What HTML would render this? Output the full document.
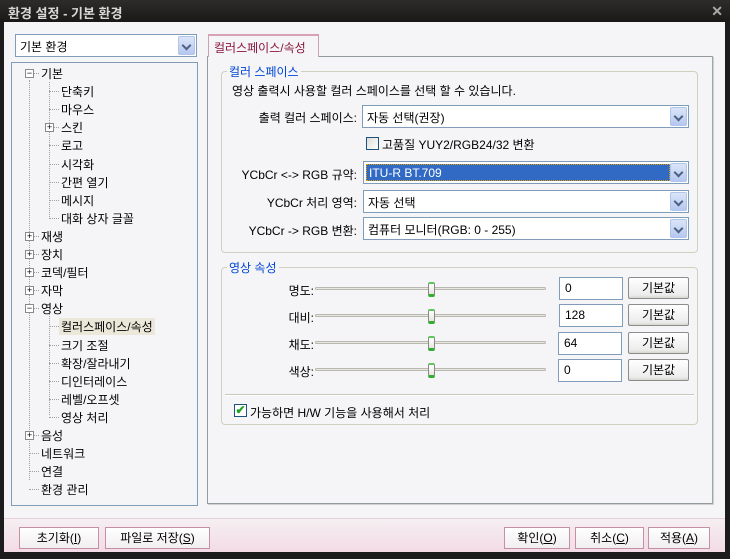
<!DOCTYPE html>
<html><head><meta charset="utf-8"><style>
*{margin:0;padding:0;box-sizing:border-box}
body{width:730px;height:559px;background:#1c1c1c;font-family:"Liberation Sans","Noto Sans CJK KR","NanumGothic",sans-serif;font-size:12px;color:#000;position:relative;overflow:hidden}
.a{position:absolute;white-space:nowrap}
#title{left:0;top:0;width:730px;height:22px;background:linear-gradient(#2e2c2a,#1a1918);color:#d8d8d8;font-size:13px;font-weight:bold;padding:3px 8px}
#client{left:4px;top:22px;width:721px;height:530px;background:#f5f5f7}
.combo{position:absolute;background:#fff;border:1px solid #7f9db9;height:23px;padding:3px 4px;font-size:12px}
.dd{position:absolute;right:1px;top:1px;width:17px;height:19px;background:linear-gradient(#dbe5f8,#b5c8f0);border:1px solid #b0c4ec;border-radius:2px}
.dd:after{content:"";position:absolute;left:4px;top:5px;width:5px;height:5px;border-right:2px solid #4d6185;border-bottom:2px solid #4d6185;transform:rotate(45deg)}
.grp{position:absolute;border:1px solid #d0d0bf;border-radius:4px}
.leg{position:absolute;background:#f5f5f7;color:#0046d5;padding:0 2px;font-size:12px}
.edit{position:absolute;width:64px;height:23px;background:#fff;border:1px solid #7f9db9;padding:3px 5px}
.btn{position:absolute;height:22px;background:linear-gradient(#fff,#ececec 85%,#d6d6d0);border:1px solid #8c8c8c;border-radius:2px;text-align:center;line-height:20px}
.pbtn{position:absolute;height:22px;background:linear-gradient(#fff,#f1eef0);border:1px solid #c58fa4;text-align:center;line-height:20px}
.track{position:absolute;height:3px;border:1px solid #b8b8b0;background:#e8e8e0;border-radius:2px}
.thumb{position:absolute;width:7px;height:15px;background:linear-gradient(#fff,#e4e4e0);border:1px solid #8a8a80;border-bottom:3px solid #2fb12f;border-top:2px solid #5ac85a;border-radius:2px}
.t{position:absolute;white-space:nowrap;font-size:12px}
.exp{position:absolute;width:9px;height:9px;border:1px solid #8a8a8a;background:#fff;font-size:9px;line-height:7px;text-align:center}
.vl{position:absolute;border-left:1px dotted #a0a0a0}
.hl{position:absolute;border-top:1px dotted #a0a0a0;width:9px}
u{text-decoration:underline}
</style></head><body>
<div class="a" id="title">환경 설정 - 기본 환경</div>
<div class="a" style="right:7px;top:3px;color:#aaa;font-size:14px;font-weight:bold">✕</div>
<div class="a" id="client"></div>
<div class="a" style="left:4px;top:518px;width:721px;height:34px;background:linear-gradient(#f5eff2,#f3dbe5);border-top:1px solid #e8d0da"></div>

<div class="combo" style="left:15px;top:34px;width:182px">기본 환경<div class="dd"></div></div>

<div class="a" style="left:11px;top:62px;width:187px;height:444px;background:#f5f5f7;border:1px solid #7f9db9"></div>
<div class="vl" style="left:29px;top:80px;height:400px"></div>
<div class="vl" style="left:49px;top:82px;height:135px"></div>
<div class="vl" style="left:49px;top:314px;height:101px"></div>

<div id="tree"></div>
<script>
var items=[[0,'기본','-'],[1,'단축키'],[1,'마우스'],[1,'스킨','+'],[1,'로고'],[1,'시각화'],[1,'간편 열기'],[1,'메시지'],[1,'대화 상자 글꼴'],[0,'재생','+'],[0,'장치','+'],[0,'코덱/필터','+'],[0,'자막','+'],[0,'영상','-'],[1,'컬러스페이스/속성','s'],[1,'크기 조절'],[1,'확장/잘라내기'],[1,'디인터레이스'],[1,'레벨/오프셋'],[1,'영상 처리'],[0,'음성','+'],[0,'네트워크'],[0,'연결'],[0,'환경 관리']];
var h='';
items.forEach(function(it,i){var y=64+i*18.1;var x=it[0]?61:41;var ex=it[0]?49:29;
h+='<div class="hl" style="left:'+(ex)+'px;top:'+(y+9)+'px;width:'+(x-ex-2)+'px"></div>';
if(it[2]=='+'||it[2]=='-')h+='<div class="exp" style="left:'+(ex-4)+'px;top:'+(y+5)+'px">'+(it[2]=='+'?'+':'−')+'</div>';
h+='<div class="t" style="left:'+x+'px;top:'+(y+1)+'px;'+(it[2]=='s'?'background:#ebe7d9;padding:0 2px;margin-left:-2px;':'')+'">'+it[1]+'</div>';});
document.getElementById('tree').innerHTML=h;
</script>

<div class="a" style="left:207px;top:56px;width:506px;height:448px;border:1px solid #919b9c;border-right-color:#9aa;box-shadow:1px 1px 0 #d0d0d0"></div>
<div class="a" style="left:208px;top:34px;width:111px;height:23px;background:#f5f5f7;border:1px solid #c9a3b2;border-bottom:none;border-top:2px solid #d6a2b4;color:#8a1538;padding:3px 5px">컬러스페이스/속성</div>

<div class="grp" style="left:221px;top:71px;width:477px;height:182px"></div>
<div class="leg" style="left:227px;top:63px">컬러 스페이스</div>
<div class="t" style="left:232px;top:82px">영상 출력시 사용할 컬러 스페이스를 선택 할 수 있습니다.</div>

<div class="t" style="right:373px;top:109px">출력 컬러 스페이스:</div>
<div class="combo" style="left:362px;top:105px;width:327px">자동 선택(권장)<div class="dd"></div></div>
<div class="a" style="left:366px;top:137px;width:13px;height:13px;border:1px solid #1c5180;background:linear-gradient(135deg,#dcdcd6,#fff)"></div>
<div class="t" style="left:382px;top:136px">고품질 YUY2/RGB24/32 변환</div>

<div class="t" style="right:373px;top:166px">YCbCr &lt;-&gt; RGB 규약:</div>
<div class="combo" style="left:363px;top:161px;width:326px;padding:2px"><div style="background:#316ac5;color:#fff;height:17px;width:304px;padding:1px 2px;border:1px dotted #e0a000">ITU-R BT.709</div><div class="dd"></div></div>
<div class="t" style="right:373px;top:194px">YCbCr 처리 영역:</div>
<div class="combo" style="left:363px;top:190px;width:326px">자동 선택<div class="dd"></div></div>
<div class="t" style="right:373px;top:222px">YCbCr -&gt; RGB 변환:</div>
<div class="combo" style="left:363px;top:217px;width:326px">컴퓨터 모니터(RGB: 0 - 255)<div class="dd"></div></div>

<div class="grp" style="left:221px;top:267px;width:477px;height:158px"></div>
<div class="leg" style="left:227px;top:259px">영상 속성</div>

<div class="t" style="right:416px;top:282px">명도:</div>
<div class="t" style="right:416px;top:309px">대비:</div>
<div class="t" style="right:416px;top:336px">채도:</div>
<div class="t" style="right:416px;top:363px">색상:</div>
<div class="track" style="left:315px;top:287px;width:231px"></div>
<div class="track" style="left:315px;top:314px;width:231px"></div>
<div class="track" style="left:315px;top:341px;width:231px"></div>
<div class="track" style="left:315px;top:368px;width:231px"></div>
<div class="thumb" style="left:428px;top:282px"></div>
<div class="thumb" style="left:428px;top:309px"></div>
<div class="thumb" style="left:428px;top:336px"></div>
<div class="thumb" style="left:428px;top:363px"></div>
<div class="edit" style="left:559px;top:277px">0</div>
<div class="edit" style="left:559px;top:304px">128</div>
<div class="edit" style="left:558px;top:332px">64</div>
<div class="edit" style="left:558px;top:359px">0</div>
<div class="btn" style="left:628px;top:277px;width:61px">기본값</div>
<div class="btn" style="left:628px;top:304px;width:61px">기본값</div>
<div class="btn" style="left:628px;top:332px;width:61px">기본값</div>
<div class="btn" style="left:628px;top:359px;width:61px">기본값</div>
<div class="a" style="left:225px;top:394px;width:469px;border-top:1px solid #c8c8bc;border-bottom:1px solid #fff"></div>
<div class="a" style="left:234px;top:404px;width:13px;height:13px;border:1px solid #1c5180;background:#fff;color:#21a121;font-size:12px;line-height:11px;text-align:center;font-weight:bold">✔</div>
<div class="t" style="left:250px;top:404px">가능하면 H/W 기능을 사용해서 처리</div>

<div class="pbtn" style="left:19px;top:527px;width:80px">초기화(<u>I</u>)</div>
<div class="pbtn" style="left:105px;top:527px;width:105px">파일로 저장(<u>S</u>)</div>
<div class="pbtn" style="left:504px;top:527px;width:66px">확인(<u>O</u>)</div>
<div class="pbtn" style="left:575px;top:527px;width:69px">취소(<u>C</u>)</div>
<div class="pbtn" style="left:648px;top:527px;width:62px">적용(<u>A</u>)</div>
</body></html>
